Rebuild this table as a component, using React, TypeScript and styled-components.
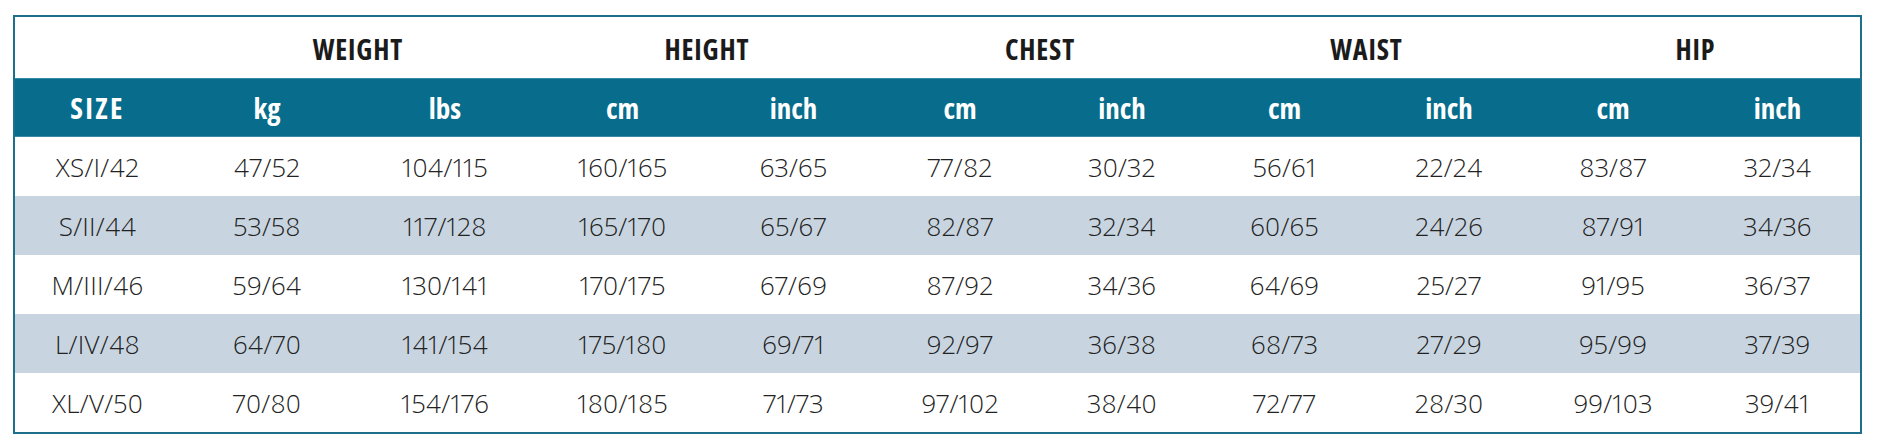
import React from 'react';
import styled, { createGlobalStyle } from 'styled-components';

const columns = '165px 174px 182px 173px 169px 164px 160px 165px 164px 164px 165px';

const groups = ['WEIGHT', 'HEIGHT', 'CHEST', 'WAIST', 'HIP'];
const units = ['SIZE', 'kg', 'lbs', 'cm', 'inch', 'cm', 'inch', 'cm', 'inch', 'cm', 'inch'];

const rows = [
    ['XS/I/42', '47/52', '104/115', '160/165', '63/65', '77/82', '30/32', '56/61', '22/24', '83/87', '32/34'],
    ['S/II/44', '53/58', '117/128', '165/170', '65/67', '82/87', '32/34', '60/65', '24/26', '87/91', '34/36'],
    ['M/III/46', '59/64', '130/141', '170/175', '67/69', '87/92', '34/36', '64/69', '25/27', '91/95', '36/37'],
    ['L/IV/48', '64/70', '141/154', '175/180', '69/71', '92/97', '36/38', '68/73', '27/29', '95/99', '37/39'],
    ['XL/V/50', '70/80', '154/176', '180/185', '71/73', '97/102', '38/40', '72/77', '28/30', '99/103', '39/41'],
];

const App = () => {
    return (
        <>
            <GlobalStyle />
            <Page>
                <Table>
                    <GroupRow>
                        <div />
                        {groups.map(g => (
                            <GroupTitle key={g}>{g}</GroupTitle>
                        ))}
                    </GroupRow>
                    <UnitRow>
                        {units.map((u, i) => (
                            <UnitCell key={i} $wide={i === 0}>{u}</UnitCell>
                        ))}
                    </UnitRow>
                    {rows.map((r, i) => (
                        <DataRow key={r[0]} $striped={i % 2 === 1}>
                            {r.map((v, j) => (
                                <DataCell key={j}>{v}</DataCell>
                            ))}
                        </DataRow>
                    ))}
                </Table>
            </Page>
        </>
    )
}

export default App

const GlobalStyle = createGlobalStyle`
    html, body {
        margin: 0;
        padding: 0;
        background: #ffffff;
    }
`

const Page = styled.div`
    width: 1889px;
    height: 448px;
    padding: 15px 0 0 13px;
    box-sizing: border-box;
    background: #ffffff;
`

const Table = styled.div`
    width: 1849px;
    box-sizing: border-box;
    border: 2px solid #1d6f8c;
    display: flex;
    flex-direction: column;
`

const Row = styled.div`
    display: grid;
    grid-template-columns: ${columns};
    align-items: center;
`

const GroupRow = styled(Row)`
    height: 61px;
    grid-template-columns: 165px 356px 342px 324px 329px 329px;
`

const GroupTitle = styled.div`
    font-family: "Open Sans", "DejaVu Sans Condensed", sans-serif;
    font-stretch: 80%;
    font-weight: 700;
    font-size: 28px;
    letter-spacing: 0.03em;
    color: #1b1b1b;
    text-align: center;
    padding-top: 2px;
`

const UnitRow = styled(Row)`
    height: 59px;
    background: #086d8c;
    border-top: 1px solid #3b8aa5;
    border-bottom: 1px solid #3b8aa5;
    box-sizing: border-box;
`

const UnitCell = styled.div<{ $wide: boolean }>`
    font-family: "Open Sans", "DejaVu Sans Condensed", sans-serif;
    font-stretch: 75%;
    font-weight: 700;
    font-size: 29px;
    letter-spacing: ${p => (p.$wide ? '0.08em' : '0')};
    color: #ffffff;
    text-align: center;
`

const DataRow = styled(Row)<{ $striped: boolean }>`
    height: 59px;
    background: ${p => (p.$striped ? '#c8d5e0' : '#ffffff')};
`

const DataCell = styled.div`
    font-family: "Open Sans", Roboto, sans-serif;
    font-stretch: 95%;
    font-weight: 300;
    font-size: 26px;
    font-variant-numeric: proportional-nums;
    letter-spacing: 0.01em;
    color: #222222;
    text-align: center;
`
